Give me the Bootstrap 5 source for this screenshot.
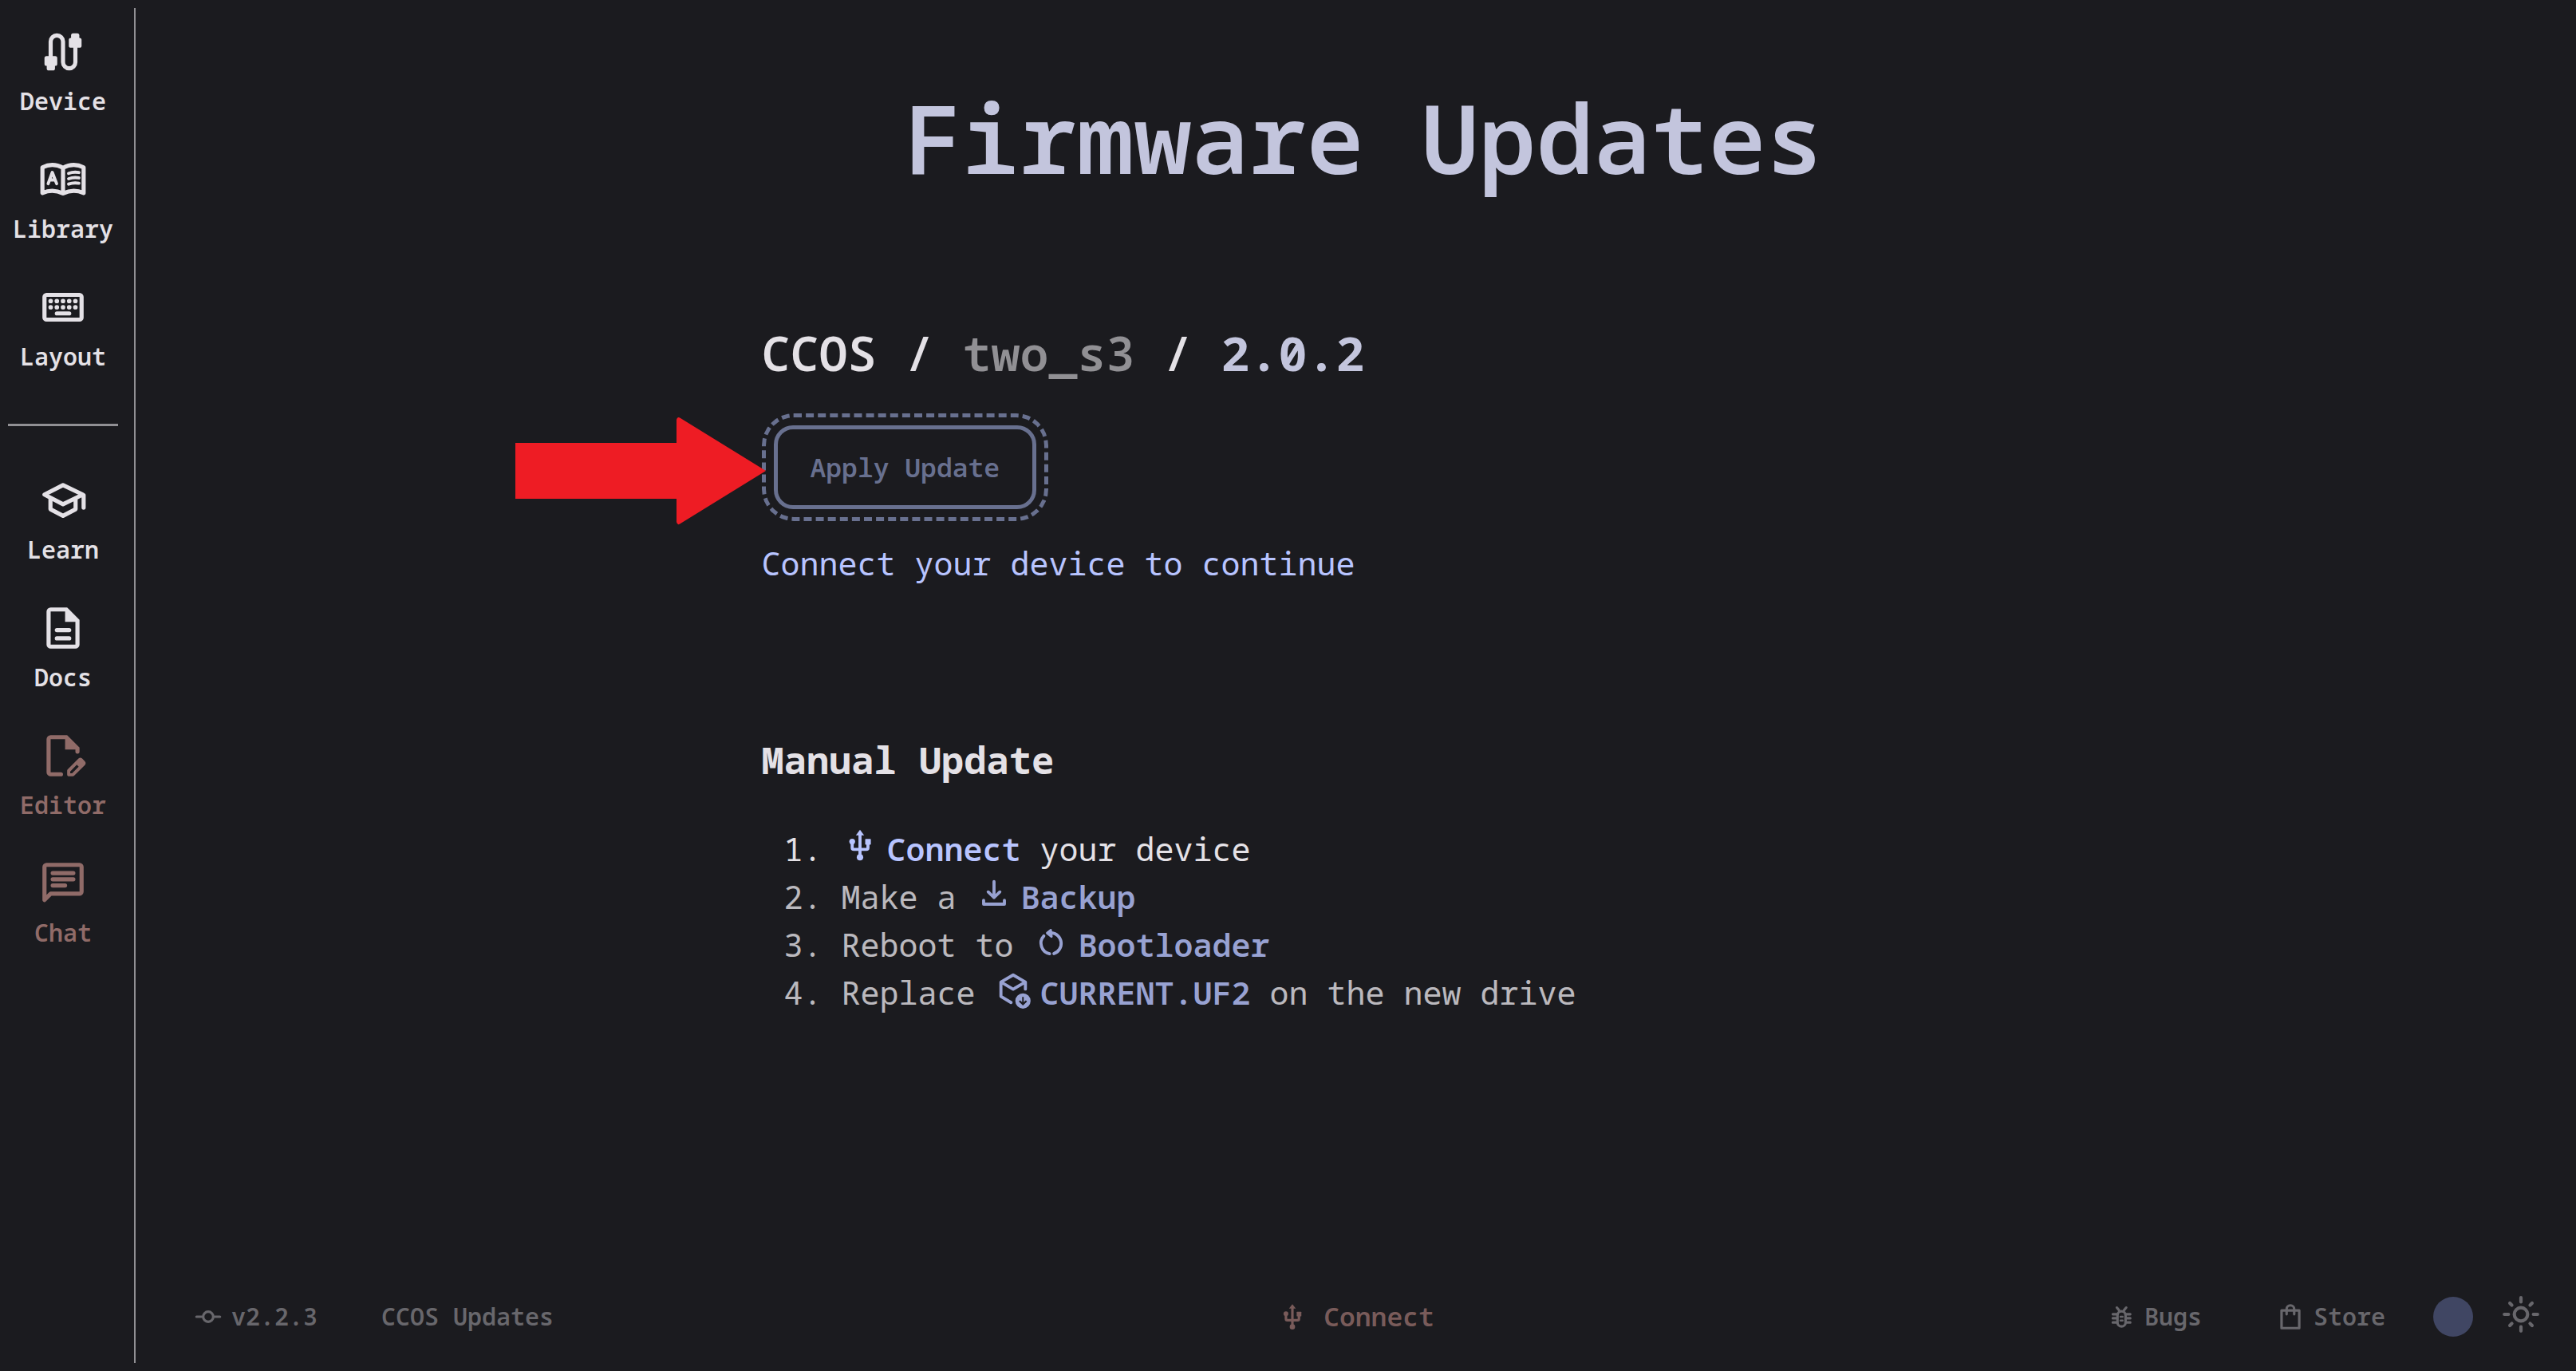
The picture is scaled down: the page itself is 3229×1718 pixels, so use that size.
<!DOCTYPE html>
<html lang="en" data-bs-theme="dark">
<head>
<meta charset="utf-8">
<meta name="viewport" content="width=device-width, initial-scale=1">
<title>Firmware Updates</title>
<link rel="stylesheet" href="https://cdn.jsdelivr.net/npm/bootstrap@5.3.0/dist/css/bootstrap.min.css">
<style>
  :root { --ink: #e4e1e6; --line: #919094; --primary: #b8c4ff; --soft: #c3c5dd; --rust: #906b68; --off: #68708f; }
  body { background: #1b1b1f; color: var(--ink); font-family: "Noto Sans Mono", "DejaVu Sans Mono", monospace; font-size: 40px; line-height: 60px; }
  a { text-decoration: none; color: inherit; }
  svg { fill: currentColor; flex: none; overflow: visible; }
  .stroke { fill: none; stroke: currentColor; stroke-width: 2; stroke-linecap: round; stroke-linejoin: round; }
  .side-rail { width: 170px; padding: 28px 22px 0 10px; }
  .side-rail::after { content: ""; position: absolute; top: 10px; bottom: 10px; right: 0; width: 2px; background: var(--line); }
  .side-link { height: 160px; padding-top: 6px; font-size: 30px; line-height: 40px; font-weight: 600; gap: 11px; }
  .side-link svg { width: 62px; height: 62px; }
  .side-rule { margin: 23px 0 56px; border-top: 3px solid var(--line); opacity: 1; }
  .rust { color: var(--rust); }
  .main-area { padding-left: 20px; }
  .page-title { font-size: 120px; line-height: 180px; font-weight: 600; color: var(--soft); margin: 82px 0 0; }
  .content-col { width: 1510px; max-width: 100%; }
  .crumb { font-size: 60px; line-height: 90px; font-weight: 600; color: var(--ink); margin: 135px 0 0; }
  .crumb .board { color: #919094; }
  .crumb .release { color: var(--soft); font-weight: 700; }
  .apply-ring { border: 5px dashed var(--off); border-radius: 40px; padding: 10px; margin: 31px 0 23px; }
  .apply-btn { border: 5px solid var(--off); border-radius: 24px; padding: 0 41px; height: 105px; font-size: 33px; font-weight: 600; background: none; }
  .apply-btn:disabled { color: var(--off); }
  .callout-arrow { position: absolute; right: 100%; top: 0; width: 314px; height: 134px; color: #ee1c24; }
  .hint { color: var(--primary); }
  .manual { font-size: 47px; line-height: 70px; font-weight: 700; color: var(--ink); margin: 181px 0 47px; }
  .steps { padding-left: 100px; }
  .steps a { color: var(--primary); font-weight: 600; }
  .steps svg { width: 46px; height: 46px; vertical-align: -3px; margin-right: 11px; }
  .muted-step { opacity: .8; }
  .foot { padding: 0 44px 36px; color: #68676c; font-size: 30px; line-height: 64px; font-weight: 600; }
  .foot svg { width: 38px; height: 38px; }
  .foot-start { gap: 80px; }
  .foot-link { gap: 10px; }
  .version { margin-left: 28px; }
  .store { margin-left: 92px; }
  .connect { font-size: 33px; color: #795b5a; gap: 20px; }
  .swatch { width: 50px; height: 50px; border-radius: 50%; background: #404663; border: 0; padding: 0; margin: 0 35px 0 60px; }
  .sun { background: none; border: 0; padding: 0 0 6px; color: inherit; }
  .foot .sun svg { width: 50px; height: 50px; display: block; }
</style>
</head>
<body>
<svg class="d-none">
  <symbol id="usb" viewBox="0 0 24 24"><path d="M12 2 9.300 5.600h5.400z"/><circle cx="6.900" cy="9.700" r="1.900"/><rect x="15.400" y="8" width="3.700" height="3.700" rx=".4"/><circle cx="12" cy="20" r="2.100"/><path class="stroke" d="M12 5v15M6.900 10v3.800a1 1 0 0 0 1 1h8.300a1 1 0 0 0 1-1V11"/></symbol>
</svg>
<div class="d-flex min-vh-100">
  <nav class="side-rail position-relative flex-shrink-0">
    <a href="#" class="side-link d-flex flex-column align-items-center"><svg viewBox="0 0 24 24"><path class="stroke" d="M6 15V7a3 3 0 0 1 6 0v10a3 3 0 0 0 6 0V9"/><rect x="3" y="14" width="6.200" height="4.800" rx="1"/><rect x="4.100" y="16" width="4" height="5" rx="1"/><rect x="14.800" y="5.200" width="6.200" height="4.800" rx="1"/><rect x="15.900" y="3" width="4" height="5" rx="1"/></svg>Device</a>
    <a href="#" class="side-link d-flex flex-column align-items-center"><svg viewBox="0 0 24 24"><path class="stroke" d="M2 6.100Q7 3.600 12 6.300 17 3.600 22 6.100V18.500Q17 16.300 12 18.700 7 16.300 2 18.500ZM12 6.300V18.700"/><path d="M4.800 14 6.800 8.500 8.900 14M5.500 12.200h2.700M14.700 9q2.500-.9 5-.4M14.700 11.600q2.500-.9 5-.4M14.700 14.200q2.500-.9 5-.4" fill="none" stroke="currentColor" stroke-width="1.500" stroke-linecap="round" stroke-linejoin="round"/></svg>Library</a>
    <a href="#" class="side-link d-flex flex-column align-items-center"><svg viewBox="0 0 24 24"><rect class="stroke" x="3" y="6" width="18" height="12" rx="1"/><path d="M6 9h12.100M6 12h12.100" stroke="currentColor" stroke-width="2.200" stroke-linecap="round" stroke-dasharray="0 3"/><path class="stroke" d="M9 15h6"/></svg>Layout</a>
    <hr class="side-rule">
    <a href="#" class="side-link d-flex flex-column align-items-center"><svg viewBox="0 0 24 24"><path class="stroke" d="M12 4.600 21.600 9.200 12 13.900 3 9.200ZM5.900 11v5.300l6.100 3.200 6.100-3.200V11M22 9.500V15.500"/></svg>Learn</a>
    <a href="#" class="side-link d-flex flex-column align-items-center"><svg viewBox="0 0 24 24"><path d="M6 2h8l6 6v12a2 2 0 0 1-2 2H6a2 2 0 0 1-2-2V4a2 2 0 0 1 2-2Zm7 7V4H6v16h12V9Z" fill-rule="evenodd"/><path class="stroke" d="M9 13h6M9 17h6"/></svg>Docs</a>
    <a href="#" class="side-link rust d-flex flex-column align-items-center"><svg viewBox="0 0 24 24"><path d="M6 22a2 2 0 0 1-2-2V4a2 2 0 0 1 2-2h8l6 6v2a1 1 0 0 1-2 0V9h-5V4H6v16h5a1 1 0 0 1 0 2Z"/><path fill-rule="evenodd" d="M14 21v-1.700q0-.4.300-.7l5.200-5.200q.9-.8 1.800 0l1.300 1.300q.8.900 0 1.800l-5.200 5.200q-.3.300-.7.300H15q-1 0-1-1Zm1.500-.5h.9l3.200-3.200-.9-.9-3.200 3.200Z"/></svg>Editor</a>
    <a href="#" class="side-link rust d-flex flex-column align-items-center"><svg viewBox="0 0 24 24"><path class="stroke" d="M3 20V4a1 1 0 0 1 1-1h16a1 1 0 0 1 1 1v12a1 1 0 0 1-1 1H6Z"/><path class="stroke" d="M7 7h10M7 10h10M7 13h6"/></svg>Chat</a>
  </nav>
  <div class="flex-grow-1 d-flex flex-column">
    <main class="main-area flex-grow-1 d-flex flex-column align-items-center">
      <h1 class="page-title">Firmware Updates</h1>
      <div class="content-col">
        <h2 class="crumb">CCOS / <span class="board">two_s3</span> / <span class="release">2.0.2</span></h2>
        <div class="d-flex">
          <div class="apply-ring position-relative">
            <svg class="callout-arrow" viewBox="0 0 314 134"><path d="M0 32H202V3q1-5 5-2L314 67 207 133q-4 3-5-2V102H0Z"/></svg>
            <button type="button" class="apply-btn d-block" disabled>Apply Update</button>
          </div>
        </div>
        <p class="hint mb-0">Connect your device to continue</p>
        <h3 class="manual">Manual Update</h3>
        <ol class="steps mb-0">
          <li><a href="#"><svg viewBox="0 0 24 24"><use href="#usb"/></svg>Connect</a> your device</li>
          <li class="muted-step">Make a <a href="#"><svg viewBox="0 0 24 24"><path class="stroke" d="M12 4.500V15M8.200 11.300 12 15l3.800-3.700M5.200 16.800v2.500h13.600v-2.500"/></svg>Backup</a></li>
          <li class="muted-step">Reboot to <a href="#"><svg viewBox="0 0 24 24"><path class="stroke" d="M7 8.800A7 7 0 0 0 10.800 20.400M13.600 20.300A7 7 0 0 0 12 6.700H10"/><path d="M11.500 5 9.200 6.900 12 9.200Z" stroke="currentColor" stroke-width="1.600" stroke-linejoin="round"/></svg>Bootloader</a></li>
          <li class="muted-step">Replace <a href="#"><svg viewBox="0 0 24 24"><path class="stroke" d="M10.600 21 4 17V7.600L12 3l8 4.600V12.200M4.300 7.800 12 12.300l7.700-4.500"/><path fill-rule="evenodd" d="M18.400 15a5 5 0 1 1 0 10 5 5 0 0 1 0-10Zm-.5 2.300v3.500l-1.400-1.300-.8.800 2.700 2.700 2.700-2.700-.8-.8-1.400 1.300v-3.500Z"/></svg>CURRENT.UF2</a> on the new drive</li>
        </ol>
      </div>
    </main>
    <footer class="foot row g-0 align-items-center">
      <div class="foot-start col d-flex">
        <a href="#" class="foot-link version d-flex align-items-center"><svg viewBox="0 0 24 24"><circle class="stroke" cx="12" cy="12" r="4"/><path class="stroke" d="M2.700 12H7M17 12h4.300"/></svg>v2.2.3</a>
        <a href="#">CCOS Updates</a>
      </div>
      <div class="col-auto"><a href="#" class="connect d-flex align-items-center"><svg viewBox="0 0 24 24"><use href="#usb"/></svg>Connect</a></div>
      <div class="col d-flex justify-content-end align-items-center">
        <a href="#" class="foot-link d-flex align-items-center"><svg viewBox="0 0 24 24"><rect class="stroke" x="9" y="7.700" width="6.400" height="12" rx="3.200"/><path class="stroke" d="M8.500 4.800l1.800 2.200M15.900 4.800l-1.800 2.200M5.300 10h3M5.300 13.200h3M5.300 16.500h3M16.100 10h3M16.100 13.200h3M16.100 16.500h3"/><path d="M11.400 12h1.600M11.400 15h1.600" stroke="currentColor" stroke-width="1.700" stroke-linecap="round"/></svg>Bugs</a>
        <a href="#" class="foot-link store d-flex align-items-center"><svg viewBox="0 0 24 24"><path class="stroke" d="M5 7h14v14H5ZM9 10V6a3 3 0 0 1 6 0v4"/></svg>Store</a>
        <button type="button" class="swatch" aria-label="Theme colour"></button>
        <button type="button" class="sun" aria-label="Toggle light mode"><svg viewBox="0 0 24 24"><path class="stroke" d="M12 2v2.500M12 19.500V22M2 12h2.500M19.500 12H22M5.300 5.300l1.200 1.200M17.500 17.500l1.200 1.200M18.700 5.300l-1.200 1.200M6.500 17.500l-1.200 1.200"/><circle class="stroke" cx="12" cy="12" r="4"/></svg></button>
      </div>
    </footer>
  </div>
</div>
<script src="https://cdn.jsdelivr.net/npm/bootstrap@5.3.0/dist/js/bootstrap.bundle.min.js"></script>
</body>
</html>
